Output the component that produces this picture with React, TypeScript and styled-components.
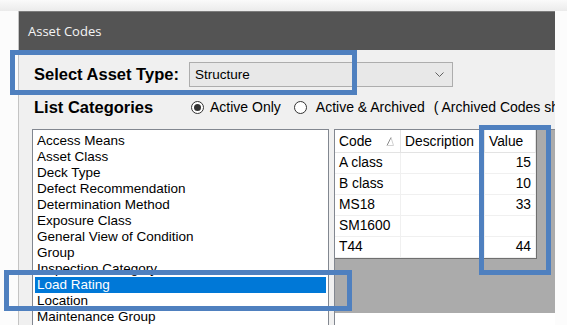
import React from "react";
import styled, { createGlobalStyle } from "styled-components";

const GlobalStyle = createGlobalStyle`
  html, body {
    margin: 0;
    padding: 0;
    background: #fcfcfc;
  }
`;

const Screen = styled.div`
  position: relative;
  width: 567px;
  height: 325px;
  overflow: hidden;
  display: flex;
  flex-direction: column;
  background: #fcfcfc;
  font-family: "Liberation Sans", Arial, sans-serif;
  color: #000;
`;

const TopStrip = styled.div`
  flex: none;
  height: 11px;
  background: linear-gradient(#fafafa, #ebebeb);
`;

const Desk = styled.div`
  flex: 1;
  display: flex;
  min-height: 0;
  padding: 0 12px 0 18px;
`;

const Window = styled.div`
  flex: 1;
  display: flex;
  flex-direction: column;
  min-width: 0;
  overflow: hidden;
  border-left: 1px solid #c4c4c4;
  background: #f0f0f0;
`;

const TitleBar = styled.div`
  flex: none;
  height: 39px;
  display: flex;
  align-items: center;
  padding-left: 9px;
  background: #545454;
  box-shadow: inset 0 1px 0 #7c7c7c;
  color: #f4f4f4;
  font-family: "Open Sans", "Liberation Sans", sans-serif;
  font-size: 13px;
`;

const SelectRow = styled.div`
  flex: none;
  display: flex;
  align-items: center;
  height: 25px;
  margin-top: 12px;
  padding-left: 15px;
`;

const BoldLabel = styled.div<{ $width: number }>`
  width: ${(p) => p.$width}px;
  flex: none;
  font-size: 16.5px;
  font-weight: bold;
  white-space: nowrap;
`;

const Combo = styled.div`
  width: 249px;
  height: 23px;
  display: flex;
  align-items: center;
  justify-content: space-between;
  padding: 0 8px 0 5px;
  border: 1px solid #adadad;
  background: #e8e8e8;
  font-size: 13.5px;
`;

const CategoryRow = styled.div`
  flex: none;
  display: flex;
  align-items: center;
  height: 16px;
  margin-top: 12px;
  padding-left: 15px;
  white-space: nowrap;
  font-size: 14px;
`;

const RadioOption = styled.label<{ $gap: number }>`
  display: flex;
  align-items: center;
  gap: ${(p) => p.$gap}px;
  margin-right: 13px;
`;

const RadioCircle = styled.span<{ $checked?: boolean }>`
  width: 11px;
  height: 11px;
  border: 1px solid #333;
  border-radius: 50%;
  background: #fff;
  display: flex;
  align-items: center;
  justify-content: center;

  &::after {
    content: "";
    width: 7px;
    height: 7px;
    border-radius: 50%;
    background: ${(p) => (p.$checked ? "#333" : "transparent")};
  }
`;

const Note = styled.span`
  margin-left: -4px;
`;

const Panels = styled.div`
  flex: 1;
  display: flex;
  gap: 5px;
  min-height: 0;
  margin-top: 14px;
  padding-left: 13px;
`;

const ListBox = styled.div`
  width: 293px;
  flex: none;
  padding: 3px 1px 0;
  border: 1px solid #828790;
  border-bottom: none;
  background: #fff;
  overflow: hidden;
`;

const ListItem = styled.div<{ $selected?: boolean }>`
  height: 16px;
  line-height: 16px;
  padding-left: 2px;
  margin: 0 1px;
  font-size: 13.5px;
  white-space: nowrap;
  background: ${(p) => (p.$selected ? "#0078d7" : "transparent")};
  color: ${(p) => (p.$selected ? "#fff" : "#000")};
`;

const GridArea = styled.div`
  flex: 1;
  display: flex;
  flex-direction: column;
  min-width: 0;
  border-left: 1px solid #828790;
  border-top: 1px solid #828790;
  background: #fff;
`;

const GridCanvas = styled.div`
  height: 183px;
  background: #ababab;
`;

const Table = styled.div`
  display: grid;
  grid-template-columns: 66px 84px 51px;
  width: 201px;
  border-right: 1px solid #6f6f6f;
  border-bottom: 1px solid #6f6f6f;
  background: #fff;
  font-size: 13.8px;
`;

const HeaderCell = styled.div`
  height: 22px;
  display: flex;
  align-items: center;
  justify-content: space-between;
  padding: 0 6px 0 4px;
  border-right: 1px solid #e3e3e3;
  border-bottom: 1px solid #e3e3e3;
  white-space: nowrap;
`;

const Cell = styled.div<{ $right?: boolean }>`
  height: 20px;
  line-height: 20px;
  padding: 0 4px;
  text-align: ${(p) => (p.$right ? "right" : "left")};
  border-right: 1px solid #f0f0f0;
  border-bottom: 1px solid #f0f0f0;
  white-space: nowrap;
`;

const Callout = styled.div`
  position: absolute;
  border: 5px solid #4f80bf;
  pointer-events: none;
`;

const categories = [
  "Access Means",
  "Asset Class",
  "Deck Type",
  "Defect Recommendation",
  "Determination Method",
  "Exposure Class",
  "General View of Condition",
  "Group",
  "Inspection Category",
  "Load Rating",
  "Location",
  "Maintenance Group",
];

const codes = [
  { code: "A class", description: "", value: "15" },
  { code: "B class", description: "", value: "10" },
  { code: "MS18", description: "", value: "33" },
  { code: "SM1600", description: "", value: "" },
  { code: "T44", description: "", value: "44" },
];

const callouts = [
  { left: 10, top: 50, width: 337, height: 35 },
  { left: 4, top: 270, width: 338, height: 31 },
  { left: 479, top: 125, width: 62, height: 140 },
];

const Chevron = () => (
  <svg width="9" height="5" viewBox="0 0 9 5">
    <polyline points="0.5,0.5 4.5,4.5 8.5,0.5" fill="none" stroke="#606060" strokeWidth="1" />
  </svg>
);

const SortGlyph = () => (
  <svg width="8" height="9" viewBox="0 0 8 9">
    <polyline points="1,8.5 5,0.5" fill="none" stroke="#8a8a8a" strokeWidth="1" />
    <polyline points="5,0.5 7.5,8.5 1,8.5" fill="none" stroke="#d0d0d0" strokeWidth="1" />
  </svg>
);

const App: React.FC = () => {
  return (
    <>
      <GlobalStyle />
      <Screen>
        <TopStrip />
        <Desk>
          <Window>
            <TitleBar>Asset Codes</TitleBar>
            <SelectRow>
              <BoldLabel $width={155}>Select Asset Type:</BoldLabel>
              <Combo>
                <span>Structure</span>
                <Chevron />
              </Combo>
            </SelectRow>
            <CategoryRow>
              <BoldLabel $width={157}>List Categories</BoldLabel>
              <RadioOption $gap={6}>
                <RadioCircle $checked />
                Active Only
              </RadioOption>
              <RadioOption $gap={9}>
                <RadioCircle />
                Active &amp; Archived
              </RadioOption>
              <Note>( Archived Codes shown in grey )</Note>
            </CategoryRow>
            <Panels>
              <ListBox>
                {categories.map((name) => (
                  <ListItem key={name} $selected={name === "Load Rating"}>
                    {name}
                  </ListItem>
                ))}
              </ListBox>
              <GridArea>
                <GridCanvas>
                  <Table>
                    <HeaderCell>
                      Code
                      <SortGlyph />
                    </HeaderCell>
                    <HeaderCell>Description</HeaderCell>
                    <HeaderCell>Value</HeaderCell>
                    {codes.map((row) => (
                      <React.Fragment key={row.code}>
                        <Cell>{row.code}</Cell>
                        <Cell>{row.description}</Cell>
                        <Cell $right>{row.value}</Cell>
                      </React.Fragment>
                    ))}
                  </Table>
                </GridCanvas>
              </GridArea>
            </Panels>
          </Window>
        </Desk>
        {callouts.map((c, i) => (
          <Callout
            key={i}
            style={{ left: c.left, top: c.top, width: c.width, height: c.height }}
          />
        ))}
      </Screen>
    </>
  );
};

export default App;
